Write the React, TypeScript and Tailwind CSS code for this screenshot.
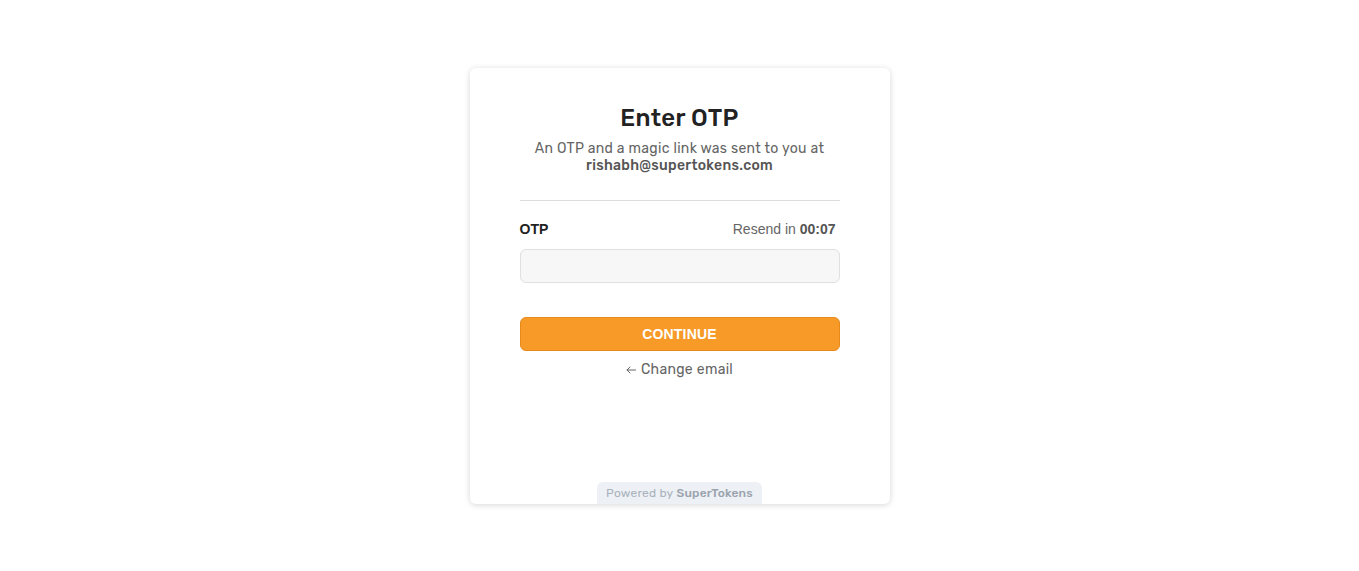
const App = () => {
  return (
    <div className="w-full min-h-[571px] bg-white flex justify-center pt-[68px]" style={{ fontFamily: "Rubik, Roboto, 'Noto Sans', sans-serif" }}>
      <div className="w-[420px] h-[436px] bg-white rounded-md shadow-[0_1px_6px_rgba(0,0,0,0.16)] flex flex-col items-center">
        <div className="w-full px-[50px] flex flex-col items-center">
          <h1 className="mt-[34px] text-[24px] leading-[32px] font-medium text-[#222222] tracking-[0.3px]">Enter OTP</h1>
          <p className="mt-[6px] text-[14px] leading-[17px] text-[#656565] text-center tracking-[0.3px]">
            An OTP and a magic link was sent to you at
            <br />
            <span className="font-medium text-[#555555]">rishabh@supertokens.com</span>
          </p>
          <div className="w-full h-px bg-[#dddddd] mt-[26px]" />
          <div className="w-full flex justify-between items-center mt-[18px] pr-1" style={{ fontFamily: "'Liberation Sans', Arial, sans-serif" }}>
            <span className="text-[14px] font-bold text-[#222222]">OTP</span>
            <span className="text-[14px] text-[#656565]">
              Resend in <span className="font-bold text-[#555555]">00:07</span>
            </span>
          </div>
          <input className="w-full h-[34px] mt-[9px] bg-[#f7f7f7] border border-[#e0e0e0] rounded-md outline-none" />
          <button className="w-full h-[34px] mt-[34px] bg-[#f79a27] border border-[#e68a1c] rounded-md text-white text-[14px] font-bold tracking-[0.2px]" style={{ fontFamily: "'Liberation Sans', Arial, sans-serif" }}>
            CONTINUE
          </button>
          <div className="mt-[8px] text-[14px] text-[#656565] tracking-[0.3px] flex items-center gap-[5px]">
            <svg width="10" height="8" viewBox="0 0 10 8" fill="none" stroke="#656565" strokeWidth="1" strokeLinecap="round" strokeLinejoin="round">
              <path d="M9.5 4H1M4 1L1 4l3 3" />
            </svg>
            <span>Change email</span>
          </div>
        </div>
        <div className="mt-auto px-[9px] h-[22px] bg-[#edf0f4] rounded-t-md flex items-center text-[12px] text-[#a9b2bd] tracking-[0.2px]">
          Powered by&nbsp;<span className="font-medium text-[#9aa3ae]">SuperTokens</span>
        </div>
      </div>
    </div>
  );
};

export default App;
